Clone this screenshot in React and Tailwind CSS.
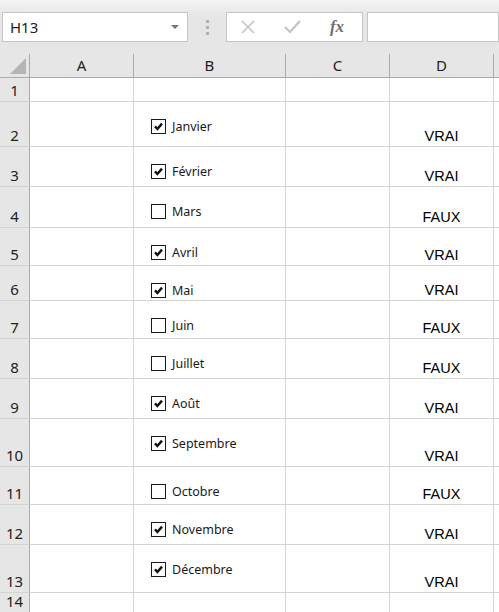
import React from 'react';

const rows = [
    { n: 1, h: 24 },
    { n: 2, h: 45, label: 'Janvier', checked: true },
    { n: 3, h: 40, label: 'Février', checked: true },
    { n: 4, h: 41, label: 'Mars', checked: false },
    { n: 5, h: 38, label: 'Avril', checked: true },
    { n: 6, h: 35, label: 'Mai', checked: true },
    { n: 7, h: 38, label: 'Juin', checked: false },
    { n: 8, h: 40, label: 'Juillet', checked: false },
    { n: 9, h: 40, label: 'Août', checked: true },
    { n: 10, h: 48, label: 'Septembre', checked: true },
    { n: 11, h: 38, label: 'Octobre', checked: false },
    { n: 12, h: 40, label: 'Novembre', checked: true },
    { n: 13, h: 48, label: 'Décembre', checked: true },
    { n: 14, h: 20 },
];

function CheckBox({ checked }) {
    return (
        <div className="w-[15px] h-[15px] border border-[#1a1a1a] bg-white flex items-center justify-center">
            {checked && (
                <svg width="11" height="11" viewBox="0 0 11 11">
                    <path d="M2 5.4 L4.4 8 L9 2.6" fill="none" stroke="#111" strokeWidth="2.4" />
                </svg>
            )}
        </div>
    );
}

export default function App() {
    const ui = { fontFamily: '"Noto Sans", "Open Sans", sans-serif' };
    const cell = { fontFamily: '"Liberation Sans", Arial, sans-serif' };

    return (
        <div className="w-[499px] h-[612px] overflow-hidden bg-white">
            {/* formula bar */}
            <div className="h-[54px] bg-gradient-to-b from-[#f4f4f4] to-[#e6e6e6] to-[30%] flex items-start pt-[12px] pl-[2px]">
                <div className="w-[186px] h-[30px] bg-white border border-[#c6c6c6] flex items-center justify-between pl-[7px] pr-[8px]">
                    <span className="text-[15px] text-[#222]" style={ui}>H13</span>
                    <svg width="8" height="5" viewBox="0 0 8 5"><path d="M0 0 H8 L4 4 Z" fill="#777" /></svg>
                </div>
                <div className="w-[38px] h-[30px] flex flex-col items-center justify-center gap-[3px]">
                    <div className="w-[3px] h-[3px] bg-[#b0b0b0]" />
                    <div className="w-[3px] h-[3px] bg-[#b0b0b0]" />
                    <div className="w-[3px] h-[3px] bg-[#b0b0b0]" />
                </div>
                <div className="w-[137px] h-[30px] bg-white border border-[#c6c6c6] flex items-center">
                    <div className="w-[42px] flex justify-center">
                        <svg width="14" height="14" viewBox="0 0 14 14"><path d="M1 1 L13 13 M13 1 L1 13" stroke="#c4c4c4" strokeWidth="1.6" /></svg>
                    </div>
                    <div className="w-[46px] flex justify-center">
                        <svg width="17" height="14" viewBox="0 0 17 14"><path d="M1 7 L6 12 L16 1" fill="none" stroke="#c4c4c4" strokeWidth="2.2" /></svg>
                    </div>
                    <div className="w-[44px] flex justify-center">
                        <span className="italic font-bold text-[17px] text-[#707070]" style={{ fontFamily: '"Liberation Serif", serif' }}>fx</span>
                    </div>
                </div>
                <div className="ml-[4px] flex-1 h-[30px] bg-white border border-[#c6c6c6]" />
            </div>

            {/* column headers */}
            <div className="flex h-[24px] bg-[#e6e6e6] border-b border-[#ababab]" style={ui}>
                <div className="w-[30px] border-r border-[#ababab] relative">
                    <svg className="absolute right-[3px] bottom-[3px]" width="16" height="16" viewBox="0 0 16 16"><path d="M16 0 V16 H0 Z" fill="#b5b5b5" /></svg>
                </div>
                {[['A', 104], ['B', 152], ['C', 104], ['D', 104]].map(([c, w]) => (
                    <div key={c} className="border-r border-[#ababab] flex items-center justify-center text-[15px] text-[#222]" style={{ width: w }}>
                        {c}
                    </div>
                ))}
                <div className="flex-1" />
            </div>

            {/* rows */}
            {rows.map((r) => (
                <div key={r.n} className="flex" style={{ height: r.h }}>
                    <div className="w-[30px] bg-[#e6e6e6] border-r border-[#ababab] border-b border-b-[#d4d4d4] flex items-end justify-center pb-[1px] text-[15px] leading-[20px] text-[#222]" style={ui}>
                        {r.n}
                    </div>
                    <div className="w-[104px] border-r border-b border-[#d4d4d4]" />
                    <div className="w-[152px] border-r border-b border-[#d4d4d4] pl-[17px] pt-[17px]">
                        {r.label && (
                            <div className="flex items-center gap-[6px]">
                                <CheckBox checked={r.checked} />
                                <span className="text-[12.5px] text-[#1a1a1a] leading-[15px]" style={ui}>{r.label}</span>
                            </div>
                        )}
                    </div>
                    <div className="w-[104px] border-r border-b border-[#d4d4d4]" />
                    <div className="w-[104px] border-r border-b border-[#d4d4d4] flex items-end justify-center pb-[1px] text-[14.5px] leading-[18px] text-black" style={cell}>
                        {r.label ? (r.checked ? 'VRAI' : 'FAUX') : ''}
                    </div>
                    <div className="flex-1 border-b border-[#d4d4d4]" />
                </div>
            ))}
        </div>
    );
}
